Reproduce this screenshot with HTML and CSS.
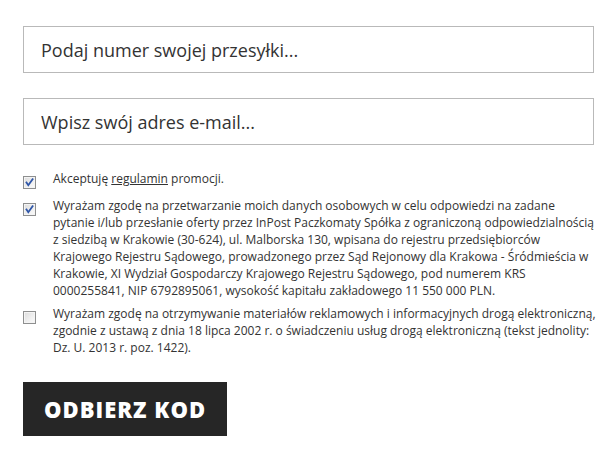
FILE: index.html
```html
<!DOCTYPE html>
<html lang="pl">
<head>
<meta charset="utf-8">
<link rel="stylesheet" href="styles.css">
</head>
<body>
<form class="form">
  <input class="field" type="text" placeholder="Podaj numer swojej przesyłki...">
  <input class="field" type="text" placeholder="Wpisz swój adres e-mail...">
  <div class="consents">
    <div class="consent c1">
      <span class="box"><svg class="check" viewBox="0 0 11 11" width="11" height="11"><path d="M2.5 5.5 L4.3 8.2 L8.6 2.2" fill="none" stroke="#2f56a8" stroke-width="1.8" stroke-linecap="square"/></svg></span>
      <p class="text">Akceptuję <a href="#" class="link">regulamin</a> promocji.</p>
    </div>
    <div class="consent c2">
      <span class="box"><svg class="check" viewBox="0 0 11 11" width="11" height="11"><path d="M2.5 5.5 L4.3 8.2 L8.6 2.2" fill="none" stroke="#2f56a8" stroke-width="1.8" stroke-linecap="square"/></svg></span>
      <p class="text">Wyrażam zgodę na przetwarzanie moich danych osobowych w celu odpowiedzi na zadane pytanie i/lub przesłanie oferty przez InPost Paczkomaty Spółka z ograniczoną odpowiedzialnością z siedzibą w Krakowie (30-624), ul. Malborska 130, wpisana do rejestru przedsiębiorców Krajowego Rejestru Sądowego, prowadzonego przez Sąd Rejonowy dla Krakowa - Śródmieścia w Krakowie, XI Wydział Gospodarczy Krajowego Rejestru Sądowego, pod numerem KRS 0000255841, NIP 6792895061, wysokość kapitału zakładowego 11 550 000 PLN.</p>
    </div>
    <div class="consent c3">
      <span class="box"></span>
      <p class="text">Wyrażam zgodę na otrzymywanie materiałów reklamowych i informacyjnych drogą elektroniczną, zgodnie z ustawą z dnia 18 lipca 2002 r. o świadczeniu usług drogą elektroniczną (tekst jednolity: Dz. U. 2013 r. poz. 1422).</p>
    </div>
  </div>
  <button class="submit" type="button">ODBIERZ KOD</button>
</form>
</body>
</html>
```
FILE: styles.css
```css
html, body {
  margin: 0;
  padding: 0;
  background: #ffffff;
}
body {
  font-family: "Open Sans", "Liberation Sans", sans-serif;
  color: #333333;
}
.form {
  display: flex;
  flex-direction: column;
  align-items: flex-start;
  padding: 26px 0 0 23px;
}
.field {
  box-sizing: border-box;
  width: 571px;
  height: 47px;
  margin: 0 0 25px 0;
  padding: 0 17px;
  border: 1px solid #b9b9b9;
  border-radius: 0;
  background: #ffffff;
  font-family: "Open Sans", sans-serif;
  font-size: 18px;
  color: #333333;
  outline: none;
}
.field::placeholder {
  color: #333333;
  opacity: 1;
}
.field + .field {
  margin-bottom: 25px;
}
.consents {
  display: flex;
  flex-direction: column;
  width: 576px;
}
.consent {
  display: flex;
  align-items: flex-start;
}
.c1 { margin-bottom: 8px; }
.c2 { margin-bottom: 6px; }
.box {
  box-sizing: border-box;
  flex: none;
  width: 13px;
  height: 13px;
  margin-top: 6px;
  margin-right: 17px;
  border: 1px solid #8e8f8f;
  background: linear-gradient(135deg, #dcdcdc 0%, #f0f0f0 60%, #fbfbfb 100%);
  box-shadow: inset 0 0 0 1px #f4f4f4;
  display: flex;
  align-items: center;
  justify-content: center;
}
.check {
  display: block;
}
.text {
  margin: 0;
  font-size: 12px;
  line-height: 17px;
  color: #333333;
}
.link {
  color: #333333;
  text-decoration: underline;
}
.submit {
  margin-top: 26px;
  height: 54px;
  padding: 0 21px;
  border: 0;
  border-radius: 0;
  background: #262626;
  color: #ffffff;
  font-family: "Open Sans", sans-serif;
  font-size: 22px;
  font-weight: 800;
  letter-spacing: 1px;
  cursor: pointer;
}
```
